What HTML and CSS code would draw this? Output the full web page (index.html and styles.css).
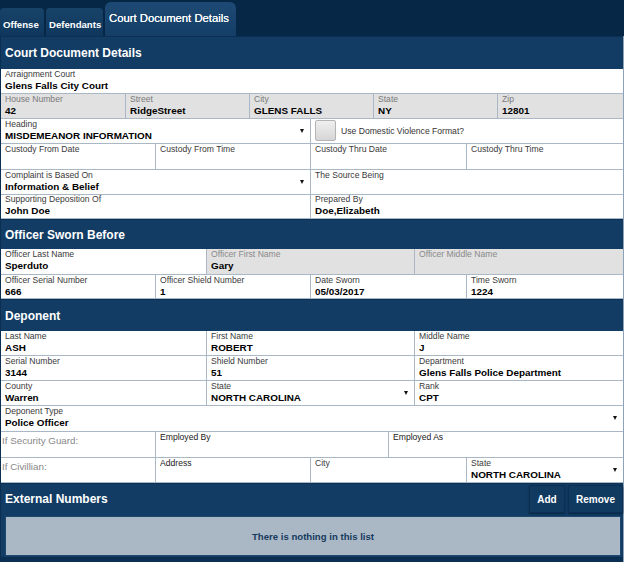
FILE: index.html
```html
<!DOCTYPE html>
<html>
<head>
<meta charset="utf-8">
<link rel="stylesheet" href="styles.css">
</head>
<body>
<div class="page">
  <div class="tabs">
    <div class="tab">Offense</div>
    <div class="tab">Defendants</div>
    <div class="tab active">Court Document Details</div>
  </div>
  <div class="panel">
    <div class="sec-head first">Court Document Details</div>

    <div class="row c1">
      <div class="cell"><div class="lbl">Arraignment Court</div><div class="val">Glens Falls City Court</div></div>
    </div>
    <div class="row c5 gray">
      <div class="cell"><div class="lbl">House Number</div><div class="val">42</div></div>
      <div class="cell"><div class="lbl">Street</div><div class="val">RidgeStreet</div></div>
      <div class="cell"><div class="lbl">City</div><div class="val">GLENS FALLS</div></div>
      <div class="cell"><div class="lbl">State</div><div class="val">NY</div></div>
      <div class="cell"><div class="lbl">Zip</div><div class="val">12801</div></div>
    </div>
    <div class="row c2">
      <div class="cell"><div class="lbl">Heading</div><div class="val sel"><span>MISDEMEANOR INFORMATION</span><i class="arrow"></i></div></div>
      <div class="cell check"><span class="box"></span><span class="chk-lbl">Use Domestic Violence Format?</span></div>
    </div>
    <div class="row c4 tall">
      <div class="cell"><div class="lbl">Custody From Date</div></div>
      <div class="cell"><div class="lbl">Custody From Time</div></div>
      <div class="cell"><div class="lbl">Custody Thru Date</div></div>
      <div class="cell"><div class="lbl">Custody Thru Time</div></div>
    </div>
    <div class="row c2 short">
      <div class="cell"><div class="lbl">Complaint is Based On</div><div class="val sel"><span>Information &amp; Belief</span><i class="arrow"></i></div></div>
      <div class="cell"><div class="lbl">The Source Being</div></div>
    </div>
    <div class="row c2">
      <div class="cell"><div class="lbl">Supporting Deposition Of</div><div class="val">John Doe</div></div>
      <div class="cell"><div class="lbl">Prepared By</div><div class="val">Doe,Elizabeth</div></div>
    </div>

    <div class="sec-head h30">Officer Sworn Before</div>
    <div class="row c3 tall">
      <div class="cell"><div class="lbl">Officer Last Name</div><div class="val">Sperduto</div></div>
      <div class="cell g"><div class="lbl lt">Officer First Name</div><div class="val">Gary</div></div>
      <div class="cell g"><div class="lbl lt">Officer Middle Name</div></div>
    </div>
    <div class="row c4 short">
      <div class="cell"><div class="lbl">Officer Serial Number</div><div class="val">666</div></div>
      <div class="cell"><div class="lbl">Officer Shield Number</div><div class="val">1</div></div>
      <div class="cell"><div class="lbl">Date Sworn</div><div class="val">05/03/2017</div></div>
      <div class="cell"><div class="lbl">Time Sworn</div><div class="val">1224</div></div>
    </div>

    <div class="sec-head h32">Deponent</div>
    <div class="row c3">
      <div class="cell"><div class="lbl">Last Name</div><div class="val">ASH</div></div>
      <div class="cell"><div class="lbl">First Name</div><div class="val">ROBERT</div></div>
      <div class="cell"><div class="lbl">Middle Name</div><div class="val">J</div></div>
    </div>
    <div class="row c3">
      <div class="cell"><div class="lbl">Serial Number</div><div class="val">3144</div></div>
      <div class="cell"><div class="lbl">Shield Number</div><div class="val">51</div></div>
      <div class="cell"><div class="lbl">Department</div><div class="val">Glens Falls Police Department</div></div>
    </div>
    <div class="row c3">
      <div class="cell"><div class="lbl">County</div><div class="val">Warren</div></div>
      <div class="cell"><div class="lbl">State</div><div class="val sel"><span>NORTH CAROLINA</span><i class="arrow"></i></div></div>
      <div class="cell"><div class="lbl">Rank</div><div class="val">CPT</div></div>
    </div>
    <div class="row c1 tall">
      <div class="cell"><div class="lbl">Deponent Type</div><div class="val sel"><span>Police Officer</span><i class="arrow"></i></div></div>
    </div>
    <div class="row cg tall">
      <div class="cell"><div class="side">If Security Guard:</div></div>
      <div class="cell"><div class="lbl dk">Employed By</div></div>
      <div class="cell"><div class="lbl dk">Employed As</div></div>
    </div>
    <div class="row c4">
      <div class="cell"><div class="side">If Civillian:</div></div>
      <div class="cell"><div class="lbl dk">Address</div></div>
      <div class="cell"><div class="lbl">City</div></div>
      <div class="cell"><div class="lbl">State</div><div class="val sel"><span>NORTH CAROLINA</span><i class="arrow"></i></div></div>
    </div>

    <div class="sec-head ext">
      <span>External Numbers</span>
      <div class="btns">
        <button class="btn">Add</button>
        <button class="btn">Remove</button>
      </div>
    </div>
    <div class="list-wrap">
      <div class="empty">There is nothing in this list</div>
    </div>
    <div class="foot"></div>
  </div>
</div>
</body>
</html>
```

FILE: styles.css
```css
* { box-sizing: border-box; }
html, body { margin: 0; padding: 0; }
body {
  background: #0a2f53;
  font-family: "Liberation Sans", Arial, sans-serif;
  width: 624px;
  height: 562px;
  overflow: hidden;
}
.page { width: 624px; }

.tabs {
  height: 36px;
  background: #062846;
  display: flex;
  align-items: flex-end;
  gap: 2px;
}
.tab {
  height: 28px;
  padding: 0 3px;
  background: linear-gradient(#184369, #0f375d);
  color: #fff;
  font-weight: bold;
  font-size: 9.6px;
  line-height: 28px;
  padding-top: 3px;
  border-radius: 4px 4px 0 0;
}
.tab:first-child { width: 44px; }
.tab:nth-child(2) { width: 57px; }
.tab.active {
  height: 34px;
  width: 131px;
  padding: 0 0 0 4px;
  font-size: 11.3px;
  font-weight: normal;
  line-height: 32px;
  background: linear-gradient(#1d4a74, #143e66);
  border-radius: 6px 6px 0 0;
  text-shadow: 0 0 0.5px #fff;
}

.panel {
  width: 624px;
  border-left: 1px solid #0a2f53;
  border-right: 1px solid #8ea3b8;
  background: #0a2f53;
}
.sec-head {
  height: 32px;
  background: #123c64;
  border-top: 1px solid #0b3054;
  color: #fff;
  font-weight: bold;
  font-size: 12px;
  display: flex;
  align-items: center;
  padding-left: 4px;
}
.sec-head.first { height: 33px; }
.sec-head.h30 { height: 30px; }
.sec-head.h32 { height: 32px; }

.row {
  display: grid;
  height: 25px;
  background: #fff;
}
.row.tall { height: 26px; }
.row.short { height: 24px; }
.c1 { grid-template-columns: 1fr; }
.c2 { grid-template-columns: 310px 1fr; }
.c3 { grid-template-columns: 206px 208px 1fr; }
.c4 { grid-template-columns: 155px 155px 156px 1fr; }
.c5 { grid-template-columns: 125px 124px 124px 124px 1fr; }
.cg { grid-template-columns: 155px 233px 1fr; }
.gray .cell, .cell.g { background: #e1e1e1; }

.cell {
  border-right: 1px solid #a9b7c6;
  border-bottom: 1px solid #a9b7c6;
  padding: 0 4px;
  min-width: 0;
}
.cell:last-child { border-right: none; }

.lbl {
  font-size: 8.6px;
  line-height: 10px;
  color: #3a3a3a;
  white-space: nowrap;
}
.gray .lbl { color: #7a7a7a; }
.lbl.lt { color: #8a8a8a; }
.lbl.dk { color: #222; }
.val {
  font-size: 9.9px;
  font-weight: bold;
  line-height: 13px;
  color: #000;
  white-space: nowrap;
}
.val.sel {
  display: flex;
  justify-content: space-between;
  align-items: flex-start;
  line-height: 14px;
}
.arrow {
  width: 0;
  height: 0;
  border-left: 2.5px solid transparent;
  border-right: 2.5px solid transparent;
  border-top: 4px solid #111;
  margin-right: 2px;
}

.cell.check {
  display: flex;
  align-items: flex-start;
  padding: 1px 0 0 4px;
}
.box {
  width: 21px;
  height: 21px;
  border: 1px solid #b4b4b4;
  border-radius: 2px;
  background: linear-gradient(#efefef, #d6d6d6);
  flex: none;
}
.chk-lbl {
  font-size: 8.6px;
  color: #333;
  margin-left: 5px;
  margin-top: 6px;
  white-space: nowrap;
}
.side {
  font-size: 9.8px;
  color: #888;
  line-height: 12px;
  margin-left: -3px;
  padding-top: 3px;
}

.sec-head.ext {
  height: 31px;
  justify-content: space-between;
  padding-right: 0;
}
.btns { display: flex; gap: 3px; align-self: flex-start; padding-top: 1px; }
.btn {
  height: 28px;
  border: 1px solid #0b2f52;
  border-radius: 2px;
  background: #113a61;
  box-shadow: 0 1px 2px #072540;
  color: #fff;
  font-family: "Liberation Sans", Arial, sans-serif;
  font-weight: bold;
  font-size: 10px;
  padding: 0;
}
.btn:first-child { width: 36px; }
.btn:last-child { width: 55px; }

.list-wrap {
  background: #123c64;
  padding: 2px 2px 1px 4px;
  height: 43px;
}
.empty {
  height: 40px;
  background: #aab8c6;
  border: 1px solid #20476e;
  color: #163a5d;
  font-weight: bold;
  font-size: 9.6px;
  display: flex;
  align-items: center;
  justify-content: center;
}
.foot {
  height: 6px;
  border-top: 2px solid #0a2f53;
  border-bottom: 1px solid #5f7b97;
  background: #0a2f53;
}
```
